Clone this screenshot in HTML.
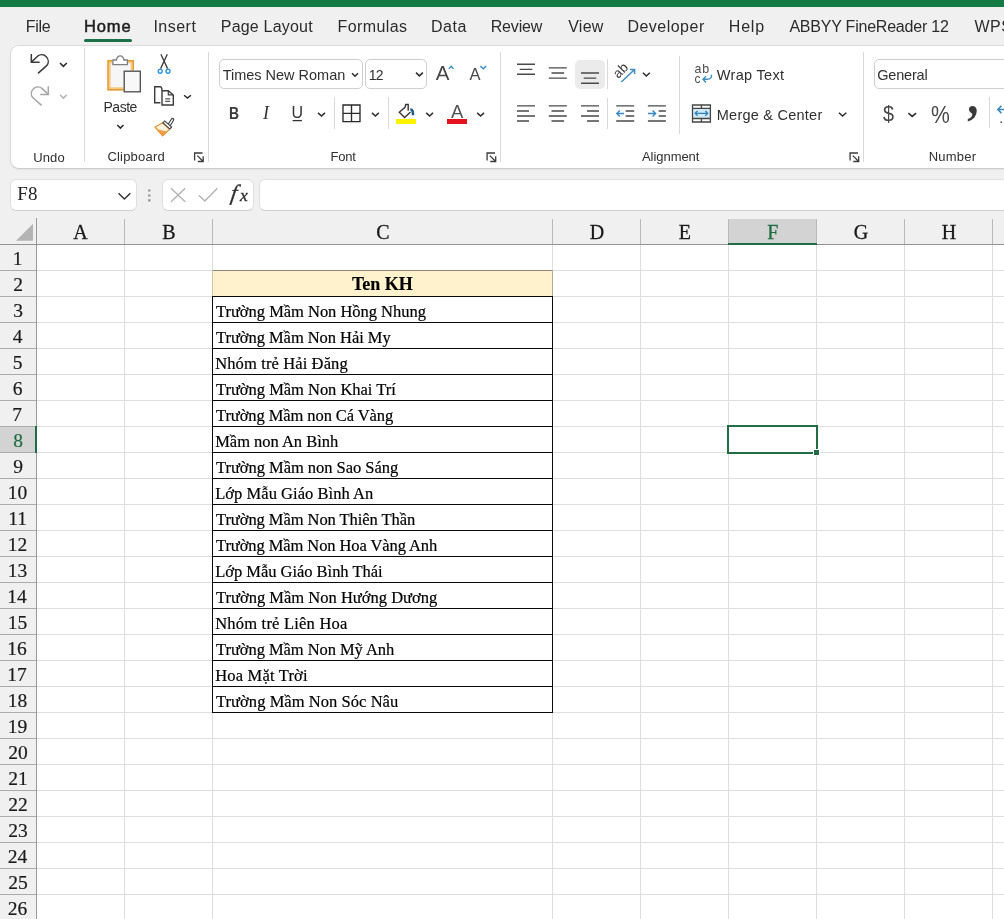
<!DOCTYPE html>
<html lang="vi">
<head>
<meta charset="utf-8">
<title>Excel</title>
<style>
html,body{margin:0;padding:0;}
body{width:1004px;height:919px;overflow:hidden;background:#f0f0f0;position:relative;font-family:"Liberation Sans",sans-serif;}
.abs,.t,svg.i{position:absolute;}
.t{white-space:pre;display:block;}
svg.i{will-change:transform;}
#texts{position:absolute;left:0;top:0;width:1004px;height:919px;will-change:transform;}
#topbar{left:0;top:0;width:1004px;height:6.6px;background:#157b44;}
#homeul{left:84px;top:38.5px;width:47.5px;height:3px;background:#1b7145;border-radius:1.5px;}
#ribbon{left:9.5px;top:44.5px;width:1010px;height:124.5px;background:#fff;border:1px solid #dadada;border-bottom-color:#cdcdcd;border-radius:9px;box-sizing:border-box;box-shadow:0 1px 2px rgba(0,0,0,0.06);}
.vsep{width:1px;background:#d9d9d9;}
.box{background:#fff;border:1px solid #cfcfcf;border-radius:5px;box-sizing:border-box;}
.fbox{background:#fff;border:1px solid #e0e0e0;border-bottom-color:#cfcfcf;border-radius:6px;box-sizing:border-box;}
#sheet{left:0;top:219px;width:1004px;height:700px;background:#fff;}
#colhead{left:0;top:211px;width:1004px;height:33px;background:#f0f0f0;border-bottom:1px solid #929292;box-sizing:content-box;}
#rowhead{left:0;top:244.5px;width:36px;height:675px;background:#f0f0f0;border-right:1px solid #999;}
.hl{height:1px;background:#dedede;left:36.5px;width:968px;}
.vl{width:1px;background:#dedede;top:245px;height:675px;}
.chs{width:1px;background:#b9b9b9;top:219px;height:25px;}
.rhs{height:1px;background:#ababab;left:0;width:36px;}
</style>
</head>
<body>
<div id="topbar" class="abs"></div>
<div id="homeul" class="abs"></div>
<div id="ribbon" class="abs"></div>
<!-- group separators -->
<div class="abs vsep" style="left:84px;top:48px;height:114px"></div>
<div class="abs vsep" style="left:208px;top:52px;height:110px"></div>
<div class="abs vsep" style="left:500px;top:52px;height:110px"></div>
<div class="abs vsep" style="left:863px;top:52px;height:110px"></div>
<!-- inner separators -->
<div class="abs vsep" style="left:334px;top:97px;height:32px"></div>
<div class="abs vsep" style="left:388px;top:97px;height:32px"></div>
<div class="abs vsep" style="left:607px;top:59px;height:30px"></div>
<div class="abs vsep" style="left:607px;top:98px;height:31px"></div>
<div class="abs vsep" style="left:679px;top:56px;height:78px"></div>
<div class="abs vsep" style="left:989px;top:97px;height:31px"></div>
<!-- combo boxes -->
<div class="abs box" style="left:219px;top:59px;width:144px;height:30px"></div>
<div class="abs box" style="left:365px;top:59px;width:62px;height:30px"></div>
<div class="abs box" style="left:874px;top:59px;width:150px;height:30px"></div>
<!-- selected bottom-align button -->
<div class="abs" style="left:575px;top:60px;width:29.5px;height:28.5px;background:#ebebeb;border-radius:5px"></div>
<!-- formula bar -->
<div class="abs fbox" style="left:9.5px;top:178.5px;width:127.5px;height:32.5px"></div>
<div class="abs fbox" style="left:161.5px;top:178.5px;width:92px;height:32.5px"></div>
<div class="abs fbox" style="left:258.5px;top:178.5px;width:760px;height:32.5px"></div>

<div id="sheet" class="abs"></div>
<div id="colhead" class="abs"></div>
<div id="rowhead" class="abs"></div>
<div class="abs" style="left:729px;top:219px;width:87px;height:25px;background:#d3d3d3;"></div>
<div class="abs" style="left:0;top:427px;width:36px;height:25px;background:#d3d3d3;"></div>
<div class="abs" style="left:213px;top:271px;width:339px;height:25px;background:#fff2cc;"></div>
<div class="abs hl" style="top:270px"></div>
<div class="abs rhs" style="top:270px"></div>
<div class="abs hl" style="top:296px"></div>
<div class="abs rhs" style="top:296px"></div>
<div class="abs hl" style="top:322px"></div>
<div class="abs rhs" style="top:322px"></div>
<div class="abs hl" style="top:348px"></div>
<div class="abs rhs" style="top:348px"></div>
<div class="abs hl" style="top:374px"></div>
<div class="abs rhs" style="top:374px"></div>
<div class="abs hl" style="top:400px"></div>
<div class="abs rhs" style="top:400px"></div>
<div class="abs hl" style="top:426px"></div>
<div class="abs rhs" style="top:426px"></div>
<div class="abs hl" style="top:452px"></div>
<div class="abs rhs" style="top:452px"></div>
<div class="abs hl" style="top:478px"></div>
<div class="abs rhs" style="top:478px"></div>
<div class="abs hl" style="top:504px"></div>
<div class="abs rhs" style="top:504px"></div>
<div class="abs hl" style="top:530px"></div>
<div class="abs rhs" style="top:530px"></div>
<div class="abs hl" style="top:556px"></div>
<div class="abs rhs" style="top:556px"></div>
<div class="abs hl" style="top:582px"></div>
<div class="abs rhs" style="top:582px"></div>
<div class="abs hl" style="top:608px"></div>
<div class="abs rhs" style="top:608px"></div>
<div class="abs hl" style="top:634px"></div>
<div class="abs rhs" style="top:634px"></div>
<div class="abs hl" style="top:660px"></div>
<div class="abs rhs" style="top:660px"></div>
<div class="abs hl" style="top:686px"></div>
<div class="abs rhs" style="top:686px"></div>
<div class="abs hl" style="top:712px"></div>
<div class="abs rhs" style="top:712px"></div>
<div class="abs hl" style="top:738px"></div>
<div class="abs rhs" style="top:738px"></div>
<div class="abs hl" style="top:764px"></div>
<div class="abs rhs" style="top:764px"></div>
<div class="abs hl" style="top:790px"></div>
<div class="abs rhs" style="top:790px"></div>
<div class="abs hl" style="top:816px"></div>
<div class="abs rhs" style="top:816px"></div>
<div class="abs hl" style="top:842px"></div>
<div class="abs rhs" style="top:842px"></div>
<div class="abs hl" style="top:868px"></div>
<div class="abs rhs" style="top:868px"></div>
<div class="abs hl" style="top:894px"></div>
<div class="abs rhs" style="top:894px"></div>
<div class="abs hl" style="top:920px"></div>
<div class="abs rhs" style="top:920px"></div>
<div class="abs vl" style="left:124px"></div>
<div class="abs chs" style="left:124px"></div>
<div class="abs vl" style="left:212px"></div>
<div class="abs chs" style="left:212px"></div>
<div class="abs vl" style="left:552px"></div>
<div class="abs chs" style="left:552px"></div>
<div class="abs vl" style="left:640px"></div>
<div class="abs chs" style="left:640px"></div>
<div class="abs vl" style="left:728px"></div>
<div class="abs chs" style="left:728px"></div>
<div class="abs vl" style="left:816px"></div>
<div class="abs chs" style="left:816px"></div>
<div class="abs vl" style="left:904px"></div>
<div class="abs chs" style="left:904px"></div>
<div class="abs vl" style="left:992px"></div>
<div class="abs chs" style="left:992px"></div>
<div class="abs chs" style="left:36px;background:#9a9a9a;top:218px;height:26px"></div>
<svg class="i" style="left:0;top:219px" width="37" height="26" viewBox="0 0 37 26"><path d="M33 4.8 L33 21.8 L16 21.8 Z" fill="#b4b4b4"/></svg>
<div class="abs" style="left:728px;top:243px;width:89px;height:2px;background:#226c46;"></div>
<div class="abs" style="left:35px;top:426px;width:2px;height:27px;background:#226c46;"></div>
<div class="abs" style="left:212px;top:296px;width:341px;height:417px;box-sizing:border-box;border:1px solid #0a0a0a;"></div>
<div class="abs" style="left:212px;top:322px;width:341px;height:1px;background:#0a0a0a;"></div>
<div class="abs" style="left:212px;top:348px;width:341px;height:1px;background:#0a0a0a;"></div>
<div class="abs" style="left:212px;top:374px;width:341px;height:1px;background:#0a0a0a;"></div>
<div class="abs" style="left:212px;top:400px;width:341px;height:1px;background:#0a0a0a;"></div>
<div class="abs" style="left:212px;top:426px;width:341px;height:1px;background:#0a0a0a;"></div>
<div class="abs" style="left:212px;top:452px;width:341px;height:1px;background:#0a0a0a;"></div>
<div class="abs" style="left:212px;top:478px;width:341px;height:1px;background:#0a0a0a;"></div>
<div class="abs" style="left:212px;top:504px;width:341px;height:1px;background:#0a0a0a;"></div>
<div class="abs" style="left:212px;top:530px;width:341px;height:1px;background:#0a0a0a;"></div>
<div class="abs" style="left:212px;top:556px;width:341px;height:1px;background:#0a0a0a;"></div>
<div class="abs" style="left:212px;top:582px;width:341px;height:1px;background:#0a0a0a;"></div>
<div class="abs" style="left:212px;top:608px;width:341px;height:1px;background:#0a0a0a;"></div>
<div class="abs" style="left:212px;top:634px;width:341px;height:1px;background:#0a0a0a;"></div>
<div class="abs" style="left:212px;top:660px;width:341px;height:1px;background:#0a0a0a;"></div>
<div class="abs" style="left:212px;top:686px;width:341px;height:1px;background:#0a0a0a;"></div>
<div class="abs" style="left:212px;top:270px;width:341px;height:1px;background:#8d8675;"></div>
<div class="abs" style="left:212px;top:270px;width:1px;height:26px;background:#c9c3b0;"></div>
<div class="abs" style="left:552px;top:270px;width:1px;height:26px;background:#b0aa98;"></div>
<div class="abs" style="left:727px;top:425px;width:91px;height:29px;box-sizing:border-box;border:2px solid #226c46;"></div>
<div class="abs" style="left:813px;top:449px;width:7px;height:7px;background:#fff;"></div>
<div class="abs" style="left:814px;top:450px;width:5px;height:5px;background:#226c46;"></div>
<!-- ICONS: one SVG overlay in page coordinates -->
<svg class="i" style="left:0;top:0" width="1004" height="220" viewBox="0 0 1004 220" fill="none" stroke-linecap="butt" stroke-linejoin="miter">
<!-- undo -->
<g stroke="#3b3b3b" stroke-width="1.5">
<path d="M31.3 54 V62.2 H39.6"/>
<path d="M31.6 61.9 L37.6 56.2 A6.6 6.6 0 0 1 46.9 65.4 L38 73.4"/>
<path d="M60 63 L63.4 66.3 L66.8 63" stroke="#2b2b2b" stroke-width="1.6"/>
</g>
<!-- redo (disabled) -->
<g stroke="#a6a6a6" stroke-width="1.5">
<path d="M48.3 86.2 V94.4 H40.3"/>
<path d="M48 94.1 L42 88.4 A6.6 6.6 0 0 0 32.7 97.6 L41.6 105.4"/>
<path d="M60 94.8 L63.4 98.1 L66.8 94.8" stroke="#b5b5b5"/>
</g>
<!-- paste -->
<rect x="109.500" y="62" width="22.500" height="26.500" fill="#f6f6f6" stroke="none"/>
<path d="M112.300 61.700 H109 V88.800 H123.500 M128 61.700 H132.300 V70.500" stroke="#f7ca80" stroke-width="3.200"/>
<path d="M112.300 60.700 H108 V89.800 H123.500 M128 60.700 H133.300 V70.500" stroke="#e49c36" stroke-width="1.400"/>
<path d="M112.900 64.700 V60 H116.500 C117 57 118.500 55.900 120.200 55.900 C121.900 55.900 123.400 57 123.900 60 H127.400 V64.700 Z" fill="#fff" stroke="#7f7f7f" stroke-width="1.300"/>
<rect x="124.200" y="71.200" width="16.100" height="20.600" fill="#f8f8f8" stroke="#4a4a4a" stroke-width="1.300"/>
<path d="M117.300 125 L120.400 128.100 L123.500 125" stroke="#2b2b2b" stroke-width="1.500"/>
<!-- cut -->
<path d="M160.900 54.300 L167.600 68.600 M167.300 54.300 L160.600 68.600" stroke="#3b3b3b" stroke-width="1.300"/>
<circle cx="160.200" cy="71.300" r="2" stroke="#2f96d3" stroke-width="1.400"/>
<circle cx="168" cy="71.300" r="2" stroke="#2f96d3" stroke-width="1.400"/>
<!-- copy -->
<path d="M160.400 102.700 H154.700 V86.800 H160 Q161.500 86.800 161.800 88.500 V90" stroke="#3b3b3b" stroke-width="1.400"/>
<path d="M162 90.700 H168.300 L173.300 95 V105 H162 Z" stroke="#3b3b3b" stroke-width="1.400" fill="#fff"/>
<path d="M168.300 90.900 V94.900 H173.100" stroke="#3b3b3b" stroke-width="1.200"/>
<path d="M165.200 98.900 H170.200 M165.200 101.400 H170.200" stroke="#555" stroke-width="1.100"/>
<path d="M184.100 95.200 L187.500 98.100 L190.900 95.200" stroke="#2b2b2b" stroke-width="1.500"/>
<!-- format painter -->
<path d="M162.600 122.800 L155 127 L162.700 135.700 L169.600 129.300 Z" fill="#fdf1df" stroke="#e9953a" stroke-width="1.300" stroke-linejoin="round"/>
<path d="M157.600 129.800 L166.400 132 L162.700 135.400 Z" fill="#f0a040" stroke="#e9953a" stroke-width="0.800"/>
<path d="M169.400 124.600 L172.500 119.600" stroke="#444" stroke-width="3.600" stroke-linecap="round"/>
<path d="M169.500 124.400 L172.400 119.800" stroke="#fff" stroke-width="1.300" stroke-linecap="round"/>
<path d="M163.400 121.600 L171.200 128.400" stroke="#444" stroke-width="3.800"/>
<path d="M164.300 122.400 L170.300 127.600" stroke="#fff" stroke-width="1.400"/>
<!-- dialog launchers -->
<g stroke="#3b3b3b" stroke-width="1.300">
<path d="M202.500 153 H194.600 V160.500"/><path d="M197.300 155.600 L203 161.300 M203.200 156.200 V161.500 H197.800"/>
<path d="M495 153 H487.100 V160.500"/><path d="M489.800 155.600 L495.500 161.300 M495.700 156.200 V161.500 H490.300"/>
<path d="M858 153 H850.100 V160.500"/><path d="M852.800 155.600 L858.500 161.300 M858.700 156.200 V161.500 H853.300"/>
</g>
<!-- font group -->
<path d="M352.0 73.3 L355.0 76.3 L358.0 73.3" stroke="#2b2b2b" stroke-width="1.5"/>
<path d="M416.0 72.6 L419.4 75.9 L422.9 72.6" stroke="#2b2b2b" stroke-width="1.5"/>
<path d="M292.6 120.6 H301.9" stroke="#333" stroke-width="1.3"/>
<path d="M318.0 112.9 L321.5 116.0 L325.0 112.9" stroke="#2b2b2b" stroke-width="1.5"/>
<path d="M448.800 68.900 L451.200 66.300 L453.600 68.900" stroke="#3589c4" stroke-width="1.400"/>
<path d="M480.400 65.900 L483.300 68.700 L486.200 65.900" stroke="#3589c4" stroke-width="1.400"/>
<path d="M343 105 H360 V121.600 H343 Z M351.500 105 V121.600 M343 113.300 H360" stroke="#2a2a2a" stroke-width="1.350"/>
<path d="M372.0 112.9 L375.4 116.0 L378.8 112.9" stroke="#2b2b2b" stroke-width="1.5"/>
<path d="M408.200 110.800 V104.500 H405.700 L405 107.300 L399.300 112.300 L404.600 117.500 L410.500 111.900" stroke="#3b3532" stroke-width="1.400" stroke-linejoin="miter"/>
<path d="M410.300 109.500 Q413.300 109.300 413 115.300" stroke="#1f5f8b" stroke-width="2.600"/>
<rect x="396" y="119" width="20" height="5" fill="#fbf300" stroke="none"/>
<path d="M426.2 112.9 L429.6 116.0 L433.0 112.9" stroke="#2b2b2b" stroke-width="1.5"/>
<rect x="447" y="119" width="20" height="5" fill="#e5121d" stroke="none"/>
<path d="M477.2 112.9 L480.6 116.0 L484.0 112.9" stroke="#2b2b2b" stroke-width="1.5"/>
<!-- alignment -->
<path d="M517.0 64.3 H535.0 M519.7 69.4 H532.3 M517.0 74.3 H535.0" stroke="#4a4a4a" stroke-width="1.4"/>
<path d="M548.8 67.9 H566.8 M551.5 73.0 H564.1 M548.8 78.1 H566.8" stroke="#4a4a4a" stroke-width="1.4"/>
<path d="M581.0 73.0 H599.0 M583.7 78.1 H596.3 M581.0 83.2 H599.0" stroke="#4a4a4a" stroke-width="1.4"/>
<path d="M517.0 105.9 H535.0 M517.0 111.0 H529.0 M517.0 116.0 H535.0 M517.0 121.0 H529.0" stroke="#4a4a4a" stroke-width="1.4"/>
<path d="M548.8 105.9 H566.8 M551.5 111.0 H564.1 M548.8 116.0 H566.8 M551.5 121.0 H564.1" stroke="#4a4a4a" stroke-width="1.4"/>
<path d="M581.0 105.9 H599.0 M587.0 111.0 H599.0 M581.0 116.0 H599.0 M587.0 121.0 H599.0" stroke="#4a4a4a" stroke-width="1.4"/>
<path d="M621.300 82 L634.300 69.700 M630 69.500 H634.600 V74" stroke="#3d8ebf" stroke-width="1.500"/>
<path d="M642.9 72.7 L646.3 76.0 L649.8 72.7" stroke="#2b2b2b" stroke-width="1.5"/>
<path d="M616.200 105.900 H634.200 M625.600 111 H634.200 M625.600 116 H634.200 M616.200 121 H634.200" stroke="#4a4a4a" stroke-width="1.400"/>
<path d="M624 113.500 H616.800 M619.800 110.500 L616.800 113.500 L619.800 116.500" stroke="#3589c4" stroke-width="1.400"/>
<path d="M647.900 105.900 H665.900 M658.700 111 H665.900 M658.700 116 H665.900 M647.900 121 H665.900" stroke="#4a4a4a" stroke-width="1.400"/>
<path d="M648 113.500 H655.600 M652.600 110.500 L655.600 113.500 L652.600 116.500" stroke="#3589c4" stroke-width="1.400"/>
<path d="M711.400 74.600 Q712.200 79.300 707 79.300 H703.300 M706 76.300 L703 79.300 L706 82.500" stroke="#3d8ebf" stroke-width="1.400"/>
<rect x="693" y="108.300" width="17" height="10.200" fill="#cfe9f8" stroke="none"/>
<path d="M692.500 105 H710.400 V122 H692.500 Z M692.500 108.400 H710.400 M692.500 118.500 H710.400 M701.400 105 V108.400 M701.400 118.500 V122" stroke="#454545" stroke-width="1.300"/>
<path d="M695.200 113.300 H707.700 M697.600 110.900 L695.200 113.300 L697.600 115.700 M705.300 110.900 L707.700 113.300 L705.300 115.700" stroke="#2b80bd" stroke-width="1.300"/>
<path d="M838.9 112.8 L842.6 116.0 L846.3 112.8" stroke="#2b2b2b" stroke-width="1.5"/>
<!-- number -->
<path d="M908.4 113.1 L912.2 116.4 L916.1 113.1" stroke="#2b2b2b" stroke-width="1.5"/>
<path d="M1004 109.500 H998 M1001.400 105.900 L997.800 109.500 L1001.400 113.100" stroke="#3a88bd" stroke-width="1.500"/><circle cx="1001.200" cy="122.200" r="0.900" fill="#555" stroke="none"/>
<!-- formula bar -->
<path d="M118.500 193.200 L124.400 199 L130.300 193.200" stroke="#333" stroke-width="1.500"/>
<path d="M148.200 189.400 h2.200 v2.200 h-2.200 Z M148.200 194.400 h2.200 v2.200 h-2.200 Z M148.200 199.300 h2.200 v2.200 h-2.200 Z" fill="#8c8c8c" stroke="none"/>
<path d="M171 188.200 L185.200 201.800 M185.200 188.200 L171 201.800" stroke="#b3b3b3" stroke-width="1.400"/>
<path d="M198.800 195.200 L204.800 201 L217.400 188.300" stroke="#b3b3b3" stroke-width="1.400"/>
<text transform="translate(618.2 78.9) rotate(-45)" font-family="Liberation Sans, sans-serif" font-size="13.5" letter-spacing="0.3" fill="#3a3a3a" stroke="none">ab</text>
<text x="694.4" y="73" font-family="Liberation Sans, sans-serif" font-size="12.4" fill="#4a4a4a" stroke="none" letter-spacing="0.9">ab</text>
<text x="694.5" y="82.5" font-family="Liberation Sans, sans-serif" font-size="12" fill="#4a4a4a" stroke="none">c</text>
</svg>

<div id="texts">
<span class="t" style='left:25.80px;top:19px;font-family:"Liberation Sans", sans-serif;font-size:16px;line-height:16px;color:#2b2b2b;letter-spacing:-0.294px;'>File</span>
<span class="t" style='left:83.90px;top:18px;font-family:"Liberation Sans", sans-serif;font-size:16.5px;line-height:16.5px;color:#1e1e1e;letter-spacing:0.920px;-webkit-text-stroke:0.5px;'>Home</span>
<span class="t" style='left:153.40px;top:19px;font-family:"Liberation Sans", sans-serif;font-size:16px;line-height:16px;color:#2b2b2b;letter-spacing:0.486px;'>Insert</span>
<span class="t" style='left:220.80px;top:19px;font-family:"Liberation Sans", sans-serif;font-size:16px;line-height:16px;color:#2b2b2b;letter-spacing:0.199px;'>Page Layout</span>
<span class="t" style='left:337.60px;top:19px;font-family:"Liberation Sans", sans-serif;font-size:16px;line-height:16px;color:#2b2b2b;letter-spacing:0.388px;'>Formulas</span>
<span class="t" style='left:431.00px;top:19px;font-family:"Liberation Sans", sans-serif;font-size:16px;line-height:16px;color:#2b2b2b;letter-spacing:0.567px;'>Data</span>
<span class="t" style='left:490.70px;top:19px;font-family:"Liberation Sans", sans-serif;font-size:16px;line-height:16px;color:#2b2b2b;letter-spacing:-0.163px;'>Review</span>
<span class="t" style='left:568.20px;top:19px;font-family:"Liberation Sans", sans-serif;font-size:16px;line-height:16px;color:#2b2b2b;letter-spacing:0.255px;'>View</span>
<span class="t" style='left:627.40px;top:19px;font-family:"Liberation Sans", sans-serif;font-size:16px;line-height:16px;color:#2b2b2b;letter-spacing:0.486px;'>Developer</span>
<span class="t" style='left:728.80px;top:19px;font-family:"Liberation Sans", sans-serif;font-size:16px;line-height:16px;color:#2b2b2b;letter-spacing:0.797px;'>Help</span>
<span class="t" style='left:789.40px;top:19px;font-family:"Liberation Sans", sans-serif;font-size:16px;line-height:16px;color:#2b2b2b;letter-spacing:-0.220px;'>ABBYY FineReader 12</span>
<span class="t" style='left:974.50px;top:19px;font-family:"Liberation Sans", sans-serif;font-size:16px;line-height:16px;color:#2b2b2b;letter-spacing:0.5px;'>WPS</span>
<span class="t" style='left:33.20px;top:151px;font-family:"Liberation Sans", sans-serif;font-size:13px;line-height:13px;color:#303030;letter-spacing:0.151px;'>Undo</span>
<span class="t" style='left:103.50px;top:100px;font-family:"Liberation Sans", sans-serif;font-size:14px;line-height:14px;color:#303030;letter-spacing:-0.482px;'>Paste</span>
<span class="t" style='left:107.40px;top:150px;font-family:"Liberation Sans", sans-serif;font-size:13px;line-height:13px;color:#303030;letter-spacing:0.209px;'>Clipboard</span>
<span class="t" style='left:222.70px;top:68px;font-family:"Liberation Sans", sans-serif;font-size:14.5px;line-height:14.5px;color:#303030;letter-spacing:-0.013px;'>Times New Roman</span>
<span class="t" style='left:368.80px;top:68px;font-family:"Liberation Sans", sans-serif;font-size:14px;line-height:14px;color:#303030;letter-spacing:-0.792px;'>12</span>
<span class="t" style='left:330.60px;top:150px;font-family:"Liberation Sans", sans-serif;font-size:13px;line-height:13px;color:#303030;letter-spacing:-0.268px;'>Font</span>
<span class="t" style='left:642.00px;top:150px;font-family:"Liberation Sans", sans-serif;font-size:13px;line-height:13px;color:#303030;letter-spacing:-0.050px;'>Alignment</span>
<span class="t" style='left:716.80px;top:68px;font-family:"Liberation Sans", sans-serif;font-size:14.5px;line-height:14.5px;color:#303030;letter-spacing:0.310px;'>Wrap Text</span>
<span class="t" style='left:716.80px;top:108px;font-family:"Liberation Sans", sans-serif;font-size:14.5px;line-height:14.5px;color:#303030;letter-spacing:0.236px;'>Merge &amp; Center</span>
<span class="t" style='left:877.30px;top:68px;font-family:"Liberation Sans", sans-serif;font-size:14.5px;line-height:14.5px;color:#303030;letter-spacing:-0.212px;'>General</span>
<span class="t" style='left:928.70px;top:150px;font-family:"Liberation Sans", sans-serif;font-size:13px;line-height:13px;color:#303030;letter-spacing:0.216px;'>Number</span>
<span class="t" style='left:228.70px;top:105px;font-family:"Liberation Sans", sans-serif;font-size:16.2px;line-height:16.2px;color:#3a3a3a;font-weight:bold;transform:scaleX(0.86);transform-origin:0 0;'>B</span>
<span class="t" style='left:263.00px;top:104px;font-family:"Liberation Serif", serif;font-size:18px;line-height:18px;color:#333;font-style:italic;'>I</span>
<span class="t" style='left:291.60px;top:105px;font-family:"Liberation Sans", sans-serif;font-size:16px;line-height:16px;color:#333;'>U</span>
<span class="t" style='left:435.80px;top:63px;font-family:"Liberation Sans", sans-serif;font-size:20.5px;line-height:20.5px;color:#484848;'>A</span>
<span class="t" style='left:469.50px;top:66px;font-family:"Liberation Sans", sans-serif;font-size:16.5px;line-height:16.5px;color:#484848;'>A</span>
<span class="t" style='left:451.00px;top:103px;font-family:"Liberation Sans", sans-serif;font-size:18.5px;line-height:18.5px;color:#505050;'>A</span>
<span class="t" style='left:883.30px;top:103px;font-family:"Liberation Sans", sans-serif;font-size:22.5px;line-height:22.5px;color:#484848;transform:scaleX(0.88);transform-origin:0 0;'>$</span>
<span class="t" style='left:930.50px;top:104px;font-family:"Liberation Sans", sans-serif;font-size:23.5px;line-height:23.5px;color:#484848;transform:scaleX(0.9);transform-origin:0 0;'>%</span>
<span class="t" style='left:964.90px;top:97px;font-family:"Liberation Serif", serif;font-size:50px;line-height:50px;color:#3a3a3a;font-weight:bold;transform:scaleX(0.9);transform-origin:0 0;'>’</span>
<span class="t" style='left:17.30px;top:184px;font-family:"Liberation Serif", serif;font-size:19px;line-height:19px;color:#222;letter-spacing:0.222px;'>F8</span>
<span class="t" style='left:230.60px;top:182px;font-family:"Liberation Serif", serif;font-size:22px;line-height:22px;color:#2e2e2e;font-style:italic;-webkit-text-stroke:0.35px;transform:skewX(-9deg);'>f</span>
<span class="t" style='left:240.00px;top:187px;font-family:"Liberation Serif", serif;font-size:17.5px;line-height:17.5px;color:#2e2e2e;font-style:italic;-webkit-text-stroke:0.35px;'>x</span>
<span class="t" style='left:73.30px;top:222px;font-family:"Liberation Serif", serif;font-size:20px;line-height:20px;color:#1a1a1a;-webkit-text-stroke:0.3px;'>A</span>
<span class="t" style='left:162.30px;top:222px;font-family:"Liberation Serif", serif;font-size:20px;line-height:20px;color:#1a1a1a;-webkit-text-stroke:0.3px;'>B</span>
<span class="t" style='left:376.30px;top:222px;font-family:"Liberation Serif", serif;font-size:20px;line-height:20px;color:#1a1a1a;-webkit-text-stroke:0.3px;'>C</span>
<span class="t" style='left:589.80px;top:222px;font-family:"Liberation Serif", serif;font-size:20px;line-height:20px;color:#1a1a1a;-webkit-text-stroke:0.3px;'>D</span>
<span class="t" style='left:678.80px;top:222px;font-family:"Liberation Serif", serif;font-size:20px;line-height:20px;color:#1a1a1a;-webkit-text-stroke:0.3px;'>E</span>
<span class="t" style='left:767.30px;top:222px;font-family:"Liberation Serif", serif;font-size:20px;line-height:20px;color:#1e6b41;-webkit-text-stroke:0.3px;'>F</span>
<span class="t" style='left:853.80px;top:222px;font-family:"Liberation Serif", serif;font-size:20px;line-height:20px;color:#1a1a1a;-webkit-text-stroke:0.3px;'>G</span>
<span class="t" style='left:941.80px;top:222px;font-family:"Liberation Serif", serif;font-size:20px;line-height:20px;color:#1a1a1a;-webkit-text-stroke:0.3px;'>H</span>
<span class="t" style='left:12.70px;top:249px;font-family:"Liberation Serif", serif;font-size:19.5px;line-height:19.5px;color:#1a1a1a;-webkit-text-stroke:0.2px;'>1</span>
<span class="t" style='left:13.20px;top:275px;font-family:"Liberation Serif", serif;font-size:19.5px;line-height:19.5px;color:#1a1a1a;-webkit-text-stroke:0.2px;'>2</span>
<span class="t" style='left:13.20px;top:301px;font-family:"Liberation Serif", serif;font-size:19.5px;line-height:19.5px;color:#1a1a1a;-webkit-text-stroke:0.2px;'>3</span>
<span class="t" style='left:12.70px;top:327px;font-family:"Liberation Serif", serif;font-size:19.5px;line-height:19.5px;color:#1a1a1a;-webkit-text-stroke:0.2px;'>4</span>
<span class="t" style='left:12.70px;top:353px;font-family:"Liberation Serif", serif;font-size:19.5px;line-height:19.5px;color:#1a1a1a;-webkit-text-stroke:0.2px;'>5</span>
<span class="t" style='left:12.70px;top:379px;font-family:"Liberation Serif", serif;font-size:19.5px;line-height:19.5px;color:#1a1a1a;-webkit-text-stroke:0.2px;'>6</span>
<span class="t" style='left:12.20px;top:405px;font-family:"Liberation Serif", serif;font-size:19.5px;line-height:19.5px;color:#1a1a1a;-webkit-text-stroke:0.2px;'>7</span>
<span class="t" style='left:13.20px;top:431px;font-family:"Liberation Serif", serif;font-size:19.5px;line-height:19.5px;color:#1e6b41;-webkit-text-stroke:0.2px;'>8</span>
<span class="t" style='left:13.20px;top:457px;font-family:"Liberation Serif", serif;font-size:19.5px;line-height:19.5px;color:#1a1a1a;-webkit-text-stroke:0.2px;'>9</span>
<span class="t" style='left:7.82px;top:483px;font-family:"Liberation Serif", serif;font-size:19.5px;line-height:19.5px;color:#1a1a1a;-webkit-text-stroke:0.2px;'>10</span>
<span class="t" style='left:8.18px;top:509px;font-family:"Liberation Serif", serif;font-size:19.5px;line-height:19.5px;color:#1a1a1a;-webkit-text-stroke:0.2px;'>11</span>
<span class="t" style='left:7.82px;top:535px;font-family:"Liberation Serif", serif;font-size:19.5px;line-height:19.5px;color:#1a1a1a;-webkit-text-stroke:0.2px;'>12</span>
<span class="t" style='left:7.82px;top:561px;font-family:"Liberation Serif", serif;font-size:19.5px;line-height:19.5px;color:#1a1a1a;-webkit-text-stroke:0.2px;'>13</span>
<span class="t" style='left:7.32px;top:587px;font-family:"Liberation Serif", serif;font-size:19.5px;line-height:19.5px;color:#1a1a1a;-webkit-text-stroke:0.2px;'>14</span>
<span class="t" style='left:7.82px;top:613px;font-family:"Liberation Serif", serif;font-size:19.5px;line-height:19.5px;color:#1a1a1a;-webkit-text-stroke:0.2px;'>15</span>
<span class="t" style='left:7.32px;top:639px;font-family:"Liberation Serif", serif;font-size:19.5px;line-height:19.5px;color:#1a1a1a;-webkit-text-stroke:0.2px;'>16</span>
<span class="t" style='left:7.32px;top:665px;font-family:"Liberation Serif", serif;font-size:19.5px;line-height:19.5px;color:#1a1a1a;-webkit-text-stroke:0.2px;'>17</span>
<span class="t" style='left:7.82px;top:691px;font-family:"Liberation Serif", serif;font-size:19.5px;line-height:19.5px;color:#1a1a1a;-webkit-text-stroke:0.2px;'>18</span>
<span class="t" style='left:7.82px;top:717px;font-family:"Liberation Serif", serif;font-size:19.5px;line-height:19.5px;color:#1a1a1a;-webkit-text-stroke:0.2px;'>19</span>
<span class="t" style='left:8.32px;top:743px;font-family:"Liberation Serif", serif;font-size:19.5px;line-height:19.5px;color:#1a1a1a;-webkit-text-stroke:0.2px;'>20</span>
<span class="t" style='left:8.32px;top:769px;font-family:"Liberation Serif", serif;font-size:19.5px;line-height:19.5px;color:#1a1a1a;-webkit-text-stroke:0.2px;'>21</span>
<span class="t" style='left:8.32px;top:795px;font-family:"Liberation Serif", serif;font-size:19.5px;line-height:19.5px;color:#1a1a1a;-webkit-text-stroke:0.2px;'>22</span>
<span class="t" style='left:8.32px;top:821px;font-family:"Liberation Serif", serif;font-size:19.5px;line-height:19.5px;color:#1a1a1a;-webkit-text-stroke:0.2px;'>23</span>
<span class="t" style='left:7.82px;top:847px;font-family:"Liberation Serif", serif;font-size:19.5px;line-height:19.5px;color:#1a1a1a;-webkit-text-stroke:0.2px;'>24</span>
<span class="t" style='left:8.32px;top:873px;font-family:"Liberation Serif", serif;font-size:19.5px;line-height:19.5px;color:#1a1a1a;-webkit-text-stroke:0.2px;'>25</span>
<span class="t" style='left:7.82px;top:899px;font-family:"Liberation Serif", serif;font-size:19.5px;line-height:19.5px;color:#1a1a1a;-webkit-text-stroke:0.2px;'>26</span>
<span class="t" style='left:216.00px;top:304px;font-family:"Liberation Serif", serif;font-size:16.5px;line-height:16.5px;color:#000;letter-spacing:-0.023px;-webkit-text-stroke:0.2px;'>Trường Mầm Non Hồng Nhung</span>
<span class="t" style='left:216.00px;top:330px;font-family:"Liberation Serif", serif;font-size:16.5px;line-height:16.5px;color:#000;letter-spacing:-0.045px;-webkit-text-stroke:0.2px;'>Trường Mầm Non Hải My</span>
<span class="t" style='left:215.20px;top:356px;font-family:"Liberation Serif", serif;font-size:16.5px;line-height:16.5px;color:#000;letter-spacing:0.122px;-webkit-text-stroke:0.2px;'>Nhóm trẻ Hải Đăng</span>
<span class="t" style='left:216.00px;top:382px;font-family:"Liberation Serif", serif;font-size:16.5px;line-height:16.5px;color:#000;letter-spacing:-0.022px;-webkit-text-stroke:0.2px;'>Trường Mầm Non Khai Trí</span>
<span class="t" style='left:216.00px;top:408px;font-family:"Liberation Serif", serif;font-size:16.5px;line-height:16.5px;color:#000;letter-spacing:-0.084px;-webkit-text-stroke:0.2px;'>Trường Mầm non Cá Vàng</span>
<span class="t" style='left:215.20px;top:434px;font-family:"Liberation Serif", serif;font-size:16.5px;line-height:16.5px;color:#000;letter-spacing:-0.019px;-webkit-text-stroke:0.2px;'>Mầm non An Bình</span>
<span class="t" style='left:216.00px;top:460px;font-family:"Liberation Serif", serif;font-size:16.5px;line-height:16.5px;color:#000;letter-spacing:-0.034px;-webkit-text-stroke:0.2px;'>Trường Mầm non Sao Sáng</span>
<span class="t" style='left:215.20px;top:486px;font-family:"Liberation Serif", serif;font-size:16.5px;line-height:16.5px;color:#000;letter-spacing:0.044px;-webkit-text-stroke:0.2px;'>Lớp Mẫu Giáo Bình An</span>
<span class="t" style='left:216.00px;top:512px;font-family:"Liberation Serif", serif;font-size:16.5px;line-height:16.5px;color:#000;letter-spacing:-0.061px;-webkit-text-stroke:0.2px;'>Trường Mầm Non Thiên Thần</span>
<span class="t" style='left:216.00px;top:538px;font-family:"Liberation Serif", serif;font-size:16.5px;line-height:16.5px;color:#000;letter-spacing:-0.085px;-webkit-text-stroke:0.2px;'>Trường Mầm Non Hoa Vàng Anh</span>
<span class="t" style='left:215.20px;top:564px;font-family:"Liberation Serif", serif;font-size:16.5px;line-height:16.5px;color:#000;letter-spacing:-0.025px;-webkit-text-stroke:0.2px;'>Lớp Mẫu Giáo Bình Thái</span>
<span class="t" style='left:216.00px;top:590px;font-family:"Liberation Serif", serif;font-size:16.5px;line-height:16.5px;color:#000;letter-spacing:0.007px;-webkit-text-stroke:0.2px;'>Trường Mầm Non Hướng Dương</span>
<span class="t" style='left:215.20px;top:616px;font-family:"Liberation Serif", serif;font-size:16.5px;line-height:16.5px;color:#000;letter-spacing:0.210px;-webkit-text-stroke:0.2px;'>Nhóm trẻ Liên Hoa</span>
<span class="t" style='left:216.00px;top:642px;font-family:"Liberation Serif", serif;font-size:16.5px;line-height:16.5px;color:#000;letter-spacing:-0.055px;-webkit-text-stroke:0.2px;'>Trường Mầm Non Mỹ Anh</span>
<span class="t" style='left:215.20px;top:668px;font-family:"Liberation Serif", serif;font-size:16.5px;line-height:16.5px;color:#000;letter-spacing:0.187px;-webkit-text-stroke:0.2px;'>Hoa Mặt Trời</span>
<span class="t" style='left:216.00px;top:694px;font-family:"Liberation Serif", serif;font-size:16.5px;line-height:16.5px;color:#000;letter-spacing:0.052px;-webkit-text-stroke:0.2px;'>Trường Mầm Non Sóc Nâu</span>
<span class="t" style='left:352.00px;top:275px;font-family:"Liberation Serif", serif;font-size:18px;line-height:18px;color:#000;font-weight:bold;letter-spacing:-0.012px;-webkit-text-stroke:0.15px;'>Ten KH</span>
</div>
</body>
</html>
